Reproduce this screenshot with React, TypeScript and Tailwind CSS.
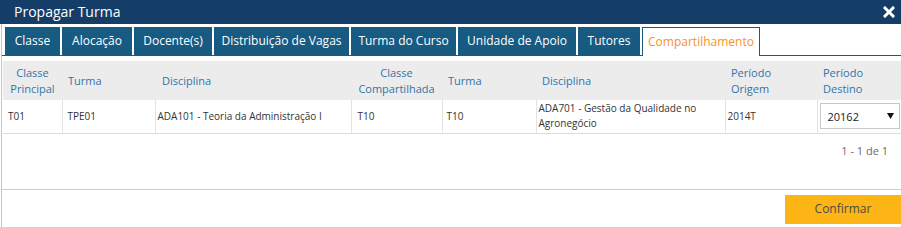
import React from 'react';

const tabs = [
  { label: 'Classe', w: 'w-[55px]' },
  { label: 'Alocação', w: 'w-[70px]' },
  { label: 'Docente(s)', w: 'w-[78px]' },
  { label: 'Distribuição de Vagas', w: 'w-[135px]' },
  { label: 'Turma do Curso', w: 'w-[105px]' },
  { label: 'Unidade de Apoio', w: 'w-[118px]' },
  { label: 'Tutores', w: 'w-[62px]' },
];

export default function App() {
  return (
    <div className="w-[901px] h-[227px] overflow-hidden bg-white" style={{ fontFamily: '"Open Sans", "Noto Sans", sans-serif' }}>
      {/* Title bar */}
      <div className="h-[24px] bg-[#143e67] flex items-center justify-between pl-[14px] pr-[6px]">
        <span className="text-[14px] text-white leading-none">Propagar Turma</span>
        <svg width="12" height="12" viewBox="0 0 12 12">
          <path d="M2 2 L10 10 M10 2 L2 10" stroke="white" strokeWidth="3" strokeLinecap="square" />
        </svg>
      </div>

      <div className="ml-px border-l border-[#c6c6c6] h-[203px] flex flex-col">
        {/* Tabs */}
        <div className="pt-[3px] pl-[3px] flex gap-[2px] border-b border-[#175a82] h-[32px]">
          {tabs.map((t) => (
            <div key={t.label} className={`${t.w} h-[28px] bg-[#175a82] text-white text-[12px] flex items-center justify-center`}>
              {t.label}
            </div>
          ))}
          <div className="w-[118px] h-[29px] bg-white border-t border-l border-r border-[#175a82] text-[#f7931e] text-[12px] flex items-center justify-center">
            Compartilhamento
          </div>
        </div>

        {/* Table */}
        <div className="pt-[5px] pl-px">
          <table className="table-fixed border-collapse w-[899px]">
            <colgroup>
              <col className="w-[59px]" />
              <col className="w-[93px]" />
              <col className="w-[196px]" />
              <col className="w-[91px]" />
              <col className="w-[94px]" />
              <col className="w-[189px]" />
              <col className="w-[92px]" />
              <col className="w-[85px]" />
            </colgroup>
            <thead>
              <tr className="h-[39px] bg-[#ececec] text-[11px] text-[#3174a8] leading-[16px]">
                <th className="font-normal text-center">Classe<br />Principal</th>
                <th className="font-normal text-left pl-[6px]">Turma</th>
                <th className="font-normal text-left pl-[7px]">Disciplina</th>
                <th className="font-normal text-center">Classe<br />Compartilhada</th>
                <th className="font-normal text-left pl-[6px]">Turma</th>
                <th className="font-normal text-left pl-[6px]">Disciplina</th>
                <th className="font-normal text-left pl-[6px]">Período<br />Origem</th>
                <th className="font-normal text-left pl-[6px]">Período<br />Destino</th>
              </tr>
            </thead>
            <tbody>
              <tr className="h-[33px] text-[10px] text-[#333] leading-[15px] border-b border-[#dcdcdc]">
                <td className="pl-[5px] border-r border-[#e2e2e2]">T01</td>
                <td className="pl-[5px] border-r border-[#e2e2e2]">TPE01</td>
                <td className="pl-[2px] border-r border-[#e2e2e2]">ADA101 - Teoria da Administração I</td>
                <td className="pl-[6px] border-r border-[#e2e2e2]">T10</td>
                <td className="pl-[4px] border-r border-[#e2e2e2]">T10</td>
                <td className="pl-[2px] pr-[20px] border-r border-[#e2e2e2]">ADA701 - Gestão da Qualidade no Agronegócio</td>
                <td className="pl-[2px] border-r border-[#e2e2e2]">2014T</td>
                <td className="pl-[2px]">
                  <div className="w-[80px] h-[26px] border border-[#c8c8c8] flex items-center justify-between pl-[7px] pr-[5px] text-[11px] text-[#222]">
                    <span>20162</span>
                    <svg width="7" height="6" viewBox="0 0 7 6">
                      <path d="M0 0 H7 L3.5 6 Z" fill="#111" />
                    </svg>
                  </div>
                </td>
              </tr>
            </tbody>
          </table>
        </div>

        {/* Pagination */}
        <div className="h-[56px] flex justify-end pt-[9px] pr-[13px] border-b border-[#cccccc]">
          <span className="text-[11px] text-[#6b6b6b] leading-[16px]">1 - 1 de 1</span>
        </div>

        {/* Footer */}
        <div className="flex justify-end pt-[5px]">
          <button className="w-[116px] h-[29px] bg-[#fdb515] text-[12px] text-[#4a4a4a] flex items-center justify-center">
            Confirmar
          </button>
        </div>
      </div>
    </div>
  );
}
